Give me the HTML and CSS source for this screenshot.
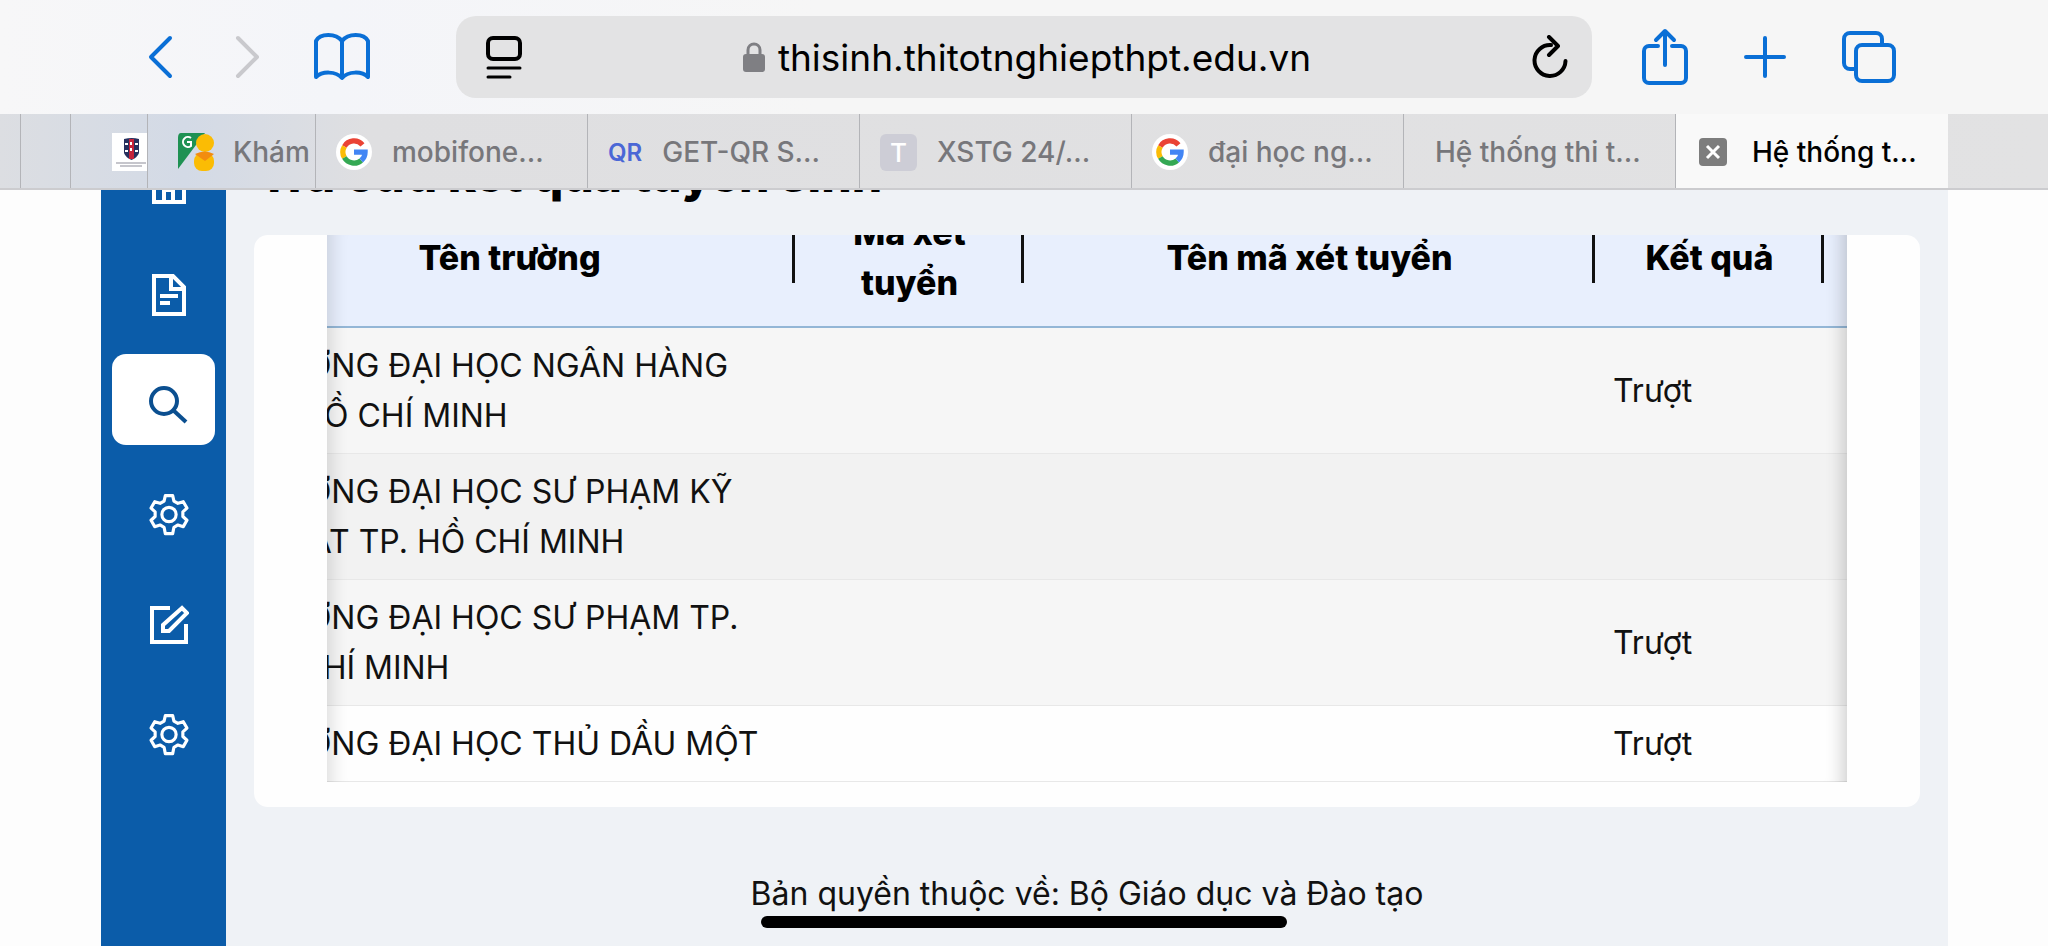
FILE: index.html
```html
<!DOCTYPE html>
<html lang="vi">
<head>
<meta charset="utf-8">
<meta name="viewport" content="width=device-width, initial-scale=1">
<title>Hệ thống thi tốt nghiệp THPT</title>
<link rel="stylesheet" href="styles.css">
</head>
<body>
<svg class="defs" aria-hidden="true">
  <symbol id="google" viewBox="0 0 48 48">
    <circle cx="24" cy="24" r="24" fill="#fff"/>
    <g fill="none" stroke-width="7">
      <path d="M35.300 14.500A14.800 14.800 0 0 0 11.200 16.600" stroke="#ea4335"/>
      <path d="M11.200 16.600A14.800 14.800 0 0 0 11.200 31.400" stroke="#fbbc05"/>
      <path d="M11.200 31.400A14.800 14.800 0 0 0 33.700 35.200" stroke="#34a853"/>
      <path d="M33.700 35.200A14.800 14.800 0 0 0 38.800 24H24" stroke="#4285f4"/>
    </g>
  </symbol>
  <symbol id="gear" viewBox="0 0 40 40">
    <path d="M16.500 1.500h7l1.200 5.200 3.800 2.200 5.100-1.600 3.500 6.100-3.900 3.600v4.400l3.900 3.600-3.500 6.100-5.100-1.600-3.800 2.200-1.200 6h-7l-1.200-6-3.800-2.200-5.100 1.600-3.500-6.100 3.900-3.600V17l-3.900-3.600 3.500-6.100 5.100 1.600 3.800-2.200z" fill="none" stroke="currentColor" stroke-width="3" stroke-linejoin="round"/>
    <circle cx="20" cy="19.500" r="6.800" fill="none" stroke="currentColor" stroke-width="3"/>
  </symbol>
</svg>

<header class="toolbar">
  <div class="group nav-group">
    <button class="tool" aria-label="Quay lại"><svg width="28" height="46" viewBox="0 0 28 46"><path d="M24 4 5 23l19 19"/></svg></button>
    <button class="tool off" aria-label="Tiến"><svg width="28" height="46" viewBox="0 0 28 46"><path d="m4 4 19 19L4 42"/></svg></button>
    <button class="tool" aria-label="Dấu trang"><svg width="56" height="48" viewBox="0 0 56 48"><path d="M28 8C22 0 6 0 2 8v36c6-6 20-6 26 1 6-7 20-7 26-1V8C50 0 34 0 28 8zM28 8v36"/></svg></button>
  </div>
  <div class="address">
    <button class="tool dark" aria-label="Chế độ đọc"><svg width="36" height="44" viewBox="0 0 36 44"><rect x="2" y="3" width="32" height="21" rx="5"/><path d="M2 33h32M2 42h22" stroke-width="3"/></svg></button>
    <a class="url" href="#"><svg width="22" height="30" viewBox="0 0 22 30"><path d="M5 14V8c0-8 12-8 12 0v6" fill="none" stroke="#7f7f83" stroke-width="3"/><rect x="0" y="12" width="22" height="18" rx="3" fill="#7f7f83"/></svg>thisinh.thitotnghiepthpt.edu.vn</a>
    <button class="tool dark" aria-label="Tải lại"><svg width="36" height="44" viewBox="0 0 36 44"><path d="M19 10a15.500 15.500 0 1 0 14.500 16M17 2l9 9-9 9"/></svg></button>
  </div>
  <div class="group act-group">
    <button class="tool" aria-label="Chia sẻ"><svg width="46" height="58" viewBox="0 0 46 58"><path d="M16 18H7a5 5 0 0 0-5 5v27a5 5 0 0 0 5 5h32a5 5 0 0 0 5-5V23a5 5 0 0 0-5-5h-9M23 37V4M14 12l9-9 9 9"/></svg></button>
    <button class="tool" aria-label="Thẻ mới"><svg width="42" height="58" viewBox="0 0 42 58"><path d="M2 29h38M21 10v38"/></svg></button>
    <button class="tool" aria-label="Các thẻ"><svg width="54" height="58" viewBox="0 0 54 58"><path d="M12 41H8a6 6 0 0 1-6-6V11a6 6 0 0 1 6-6h26a6 6 0 0 1 6 6v5"/><rect x="14" y="17" width="38" height="36" rx="6"/></svg></button>
  </div>
</header>

<nav class="tabs" aria-label="Thẻ">
  <span class="tab w1"></span>
  <span class="tab w2"></span>
  <span class="tab w3"><svg width="35" height="38" viewBox="0 0 35 38"><path fill="#fff" d="M0 0h35v38H0z"/><path d="M12 6q8-2 15 0v14q-2 5-7.500 7Q14 25 12 20z" fill="#26305e"/><path d="M17 6h5v20h-5z" fill="#c4233b"/><path d="M13 11h3m7 0h3m-13 7h3m7 0h3M19 9v3m0 3v3" stroke="#fff" stroke-width="2"/><path d="M4 30h30M8 33h22" stroke="#8d8d99" stroke-width="1"/></svg></span>
  <a class="tab w4" href="#"><svg width="38" height="38" viewBox="0 0 38 38"><path d="M4 0h24L1 36V5q0-5 3-5z" fill="#1e9153"/><path d="M14 5a5 5 0 1 0 0 8V9h-4" fill="none" stroke="#fff" stroke-width="2"/><circle cx="28" cy="10" r="9" fill="#fbbc04"/><rect x="17" y="20" width="20" height="18" rx="8" fill="#fbbc04"/><path d="M18 21q10-5 19 0l-9 7z" fill="#f28c0f"/></svg>Khám</a>
  <a class="tab" href="#"><svg class="g" width="36" height="36"><use href="#google"/></svg>mobifone...</a>
  <a class="tab" href="#"><b class="qr">QR</b>GET-QR S...</a>
  <a class="tab" href="#"><b class="letter">T</b>XSTG 24/...</a>
  <a class="tab" href="#"><svg class="g" width="36" height="36"><use href="#google"/></svg>đại học ng...</a>
  <a class="tab plain" href="#">Hệ thống thi t...</a>
  <div class="tab active"><button class="close" aria-label="Đóng thẻ"><svg width="28" height="28" viewBox="0 0 28 28"><rect width="28" height="28" rx="4" fill="#7d7d7d"/><path d="m8 8 12 12M20 8 8 20" stroke="#fff" stroke-width="3"/></svg></button><a href="#">Hệ thống t...</a></div>
  <span class="tab rest"></span>
</nav>

<div class="page">
  <aside class="side">
    <a class="item" href="#" aria-label="Trang chủ"><svg width="40" height="40" viewBox="0 0 40 40"><path d="M1 20 20 3l19 17M5 17v20h30V17M15 37V25h9v12"/></svg></a>
    <a class="item" href="#" aria-label="Hồ sơ"><svg width="40" height="44" viewBox="0 0 40 44"><path d="M5 3h19l11 11v27H5zM22 3v13h13M11 23h18M11 30h10"/></svg></a>
    <a class="item on" href="#" aria-label="Tra cứu"><svg width="40" height="40" viewBox="0 0 40 40"><circle cx="15" cy="16" r="13"/><path d="m24 25 13 12"/></svg></a>
    <a class="item" href="#" aria-label="Cài đặt"><svg width="42" height="42"><use href="#gear"/></svg></a>
    <a class="item" href="#" aria-label="Đăng ký"><svg width="40" height="40" viewBox="0 0 40 40"><path d="M21 3H3v34h34V19M14 26v-6L33 3l5 5-18 18z"/></svg></a>
    <a class="item" href="#" aria-label="Thiết lập"><svg width="42" height="42"><use href="#gear"/></svg></a>
  </aside>
  <main class="main">
    <h1>Tra cứu kết quả tuyển sinh</h1>
    <section class="card">
      <div class="scroller">
        <table>
          <colgroup><col class="wide"><col class="narrow"><col class="wide"><col class="narrow"><col class="narrow"></colgroup>
          <thead><tr><th>Tên trường</th><th>Mã xét<br>tuyển</th><th>Tên mã xét tuyển</th><th>Kết quả</th><th></th></tr></thead>
          <tbody>
            <tr class="soft"><td>TRƯỜNG ĐẠI HỌC NGÂN HÀNG<br>TP. HỒ CHÍ MINH</td><td></td><td></td><td>Trượt</td><td></td></tr>
            <tr class="mid"><td>TRƯỜNG ĐẠI HỌC SƯ PHẠM KỸ<br>THUẬT TP. HỒ CHÍ MINH</td><td></td><td></td><td></td><td></td></tr>
            <tr class="soft"><td>TRƯỜNG ĐẠI HỌC SƯ PHẠM TP.<br>HỒ CHÍ MINH</td><td></td><td></td><td>Trượt</td><td></td></tr>
            <tr><td>TRƯỜNG ĐẠI HỌC THỦ DẦU MỘT</td><td></td><td></td><td>Trượt</td><td></td></tr>
          </tbody>
        </table>
      </div>
    </section>
    <footer>Bản quyền thuộc về: Bộ Giáo dục và Đào tạo</footer>
  </main>
</div>
<div class="home-bar"></div>
</body>
</html>
```
FILE: styles.css
```css
* { box-sizing: border-box; }
body {
  margin: 0;
  height: 100vh;
  display: flex;
  flex-direction: column;
  overflow: hidden;
  background: #fdfdfd;
  color: #111;
  font-family: Inter, "Noto Sans", sans-serif;
  font-size: 32px;
}
a { color: inherit; text-decoration: none; }
button { border: 0; padding: 0; background: none; font: inherit; color: inherit; }
svg { display: block; flex: none; }
.defs { position: absolute; width: 0; height: 0; }

/* Browser toolbar */
.toolbar {
  flex: none;
  height: 114px;
  display: flex;
  align-items: center;
  background: linear-gradient(90deg, #f7f7f8, #f4f5f9 16%, #f6f6f6 40%);
}
.group { display: flex; align-items: center; flex: none; }
.nav-group { width: 456px; padding-left: 146px; gap: 60px; }
.nav-group .tool:last-child { margin-left: -8px; }
.act-group { width: 456px; padding-left: 50px; gap: 56px; }
.tool { color: #0a6fd6; }
.tool svg { fill: none; stroke: currentColor; stroke-width: 4; stroke-linecap: round; stroke-linejoin: round; }
.tool.off { color: #c9c9cd; }
.tool.dark { color: #000; }
.address {
  flex: 1;
  height: 82px;
  display: flex;
  align-items: center;
  justify-content: space-between;
  padding: 0 24px 0 30px;
  border-radius: 20px;
  background: #e3e3e4;
}
.url { display: flex; align-items: center; gap: 13px; color: #000; font-size: 37px; }

/* Tab strip */
.tabs {
  flex: none;
  height: 76px;
  display: flex;
  background: linear-gradient(90deg, #dcdee2, #d3dae6 9%, #dfdfe1 18%, #e2e2e3);
  border-bottom: 2px solid #cccccf;
  font-size: 28px;
  font-weight: 500;
  color: #77777b;
  position: relative;
  z-index: 1;
}
.tab {
  flex: 0 0 272px;
  display: flex;
  align-items: center;
  gap: 20px;
  padding: 2px 0 0 20px;
  border-right: 1px solid #b3b4b8;
  white-space: nowrap;
  overflow: hidden;
}
.w1 { flex-basis: 21px; }
.w2 { flex-basis: 50px; }
.w3 { flex-basis: 77px; padding-left: 41px; }
.w4 { flex-basis: 168px; padding-left: 29px; gap: 18px; }
.plain { padding-left: 31px; }
.active { background: #f9f9f9; color: #000; gap: 25px; padding-left: 23px; border: 0; }
.rest { flex: 1; border: 0; }
.qr { color: #4b67d6; font-size: 24px; font-weight: 600; }
.letter {
  width: 37px;
  height: 37px;
  border-radius: 6px;
  background: #cdcdd6;
  color: #fff;
  font-size: 26px;
  font-weight: 500;
  line-height: 37px;
  text-align: center;
}

/* Site */
.page {
  flex: 1;
  min-height: 0;
  display: flex;
  margin: 0 100px 0 101px;
  background: #eff2f6;
}
.side {
  flex: none;
  width: 125px;
  padding: 0 11px;
  background: #0b5ca9;
  color: #fff;
  overflow: hidden;
}
.item {
  display: flex;
  align-items: center;
  justify-content: center;
  height: 91px;
  margin-bottom: 19px;
  padding: 10px 0 0 11px;
  border-radius: 14px;
}
.item:first-child { margin-top: -56px; }
.item svg { fill: none; stroke: currentColor; stroke-width: 4; }
.item.on { background: #fff; color: #0b4f90; }
.main { flex: 1; min-width: 0; padding: 0 28px; overflow: hidden; }
h1 {
  margin: -45px 0 30px 4px;
  font-size: 48px;
  line-height: 60px;
  font-weight: 800;
  color: #000;
}
.card {
  padding: 0 73px 25px;
  border-radius: 14px;
  background: #fefefe;
}
.scroller { position: relative; overflow: hidden; }
.scroller::after {
  content: "";
  position: absolute;
  inset: 0;
  box-shadow: inset 22px 0 18px -18px rgba(0, 0, 0, 0.14), inset -22px 0 18px -18px rgba(0, 0, 0, 0.2);
}
table {
  width: 1829px;
  margin: -46px 0 0 -103px;
  table-layout: fixed;
  border-collapse: separate;
  border-spacing: 0;
  line-height: 50px;
}
.wide { width: 571px; }
.narrow { width: 229px; }
th {
  height: 139px;
  padding: 0 18px;
  background: #e8effd linear-gradient(#111, #111) right center / 3px 50px no-repeat;
  border-bottom: 2px solid #93b6d6;
  font-size: 34px;
  font-weight: 800;
  color: #000;
}
td {
  padding: 13px 18px 12px;
  border-bottom: 1px solid #e8e8e8;
}
.soft { background: #f6f6f6; }
.mid { background: #f2f2f2; }
footer { margin-top: 62px; text-align: center; line-height: 50px; }
.home-bar {
  position: fixed;
  z-index: 2;
  left: 50%;
  bottom: 18px;
  width: 526px;
  height: 12px;
  margin-left: -263px;
  border-radius: 6px;
  background: #000;
}
```
